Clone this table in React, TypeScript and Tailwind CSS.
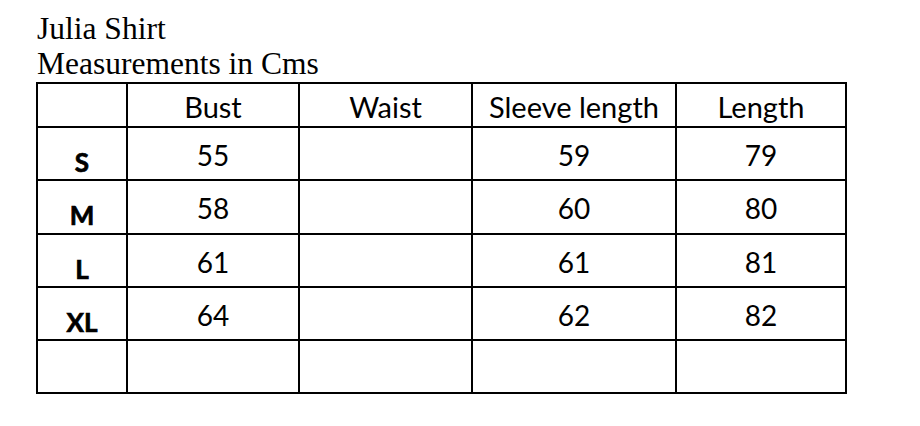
const columns = ["", "Bust", "Waist", "Sleeve length", "Length"]

const widths = ["w-[90px]", "w-[172px]", "w-[173px]", "w-[204px]", "w-[170px]"]

const rows: { size: string; values: string[]; h: string }[] = [
  { size: "S", values: ["55", "", "59", "79"], h: "h-[53px]" },
  { size: "M", values: ["58", "", "60", "80"], h: "h-[54px]" },
  { size: "L", values: ["61", "", "61", "81"], h: "h-[53px]" },
  { size: "XL", values: ["64", "", "62", "82"], h: "h-[53px]" },
  { size: "", values: ["", "", "", ""], h: "h-[53px]" },
]

export default function App() {
  return (
    <div className="w-[920px] h-[426px] bg-white text-black pl-[36px] pt-[11px]">
      <div className="pl-[1px] font-['Liberation_Serif',serif] text-[31.5px] leading-[35px]">
        <div>Julia Shirt</div>
        <div>Measurements in Cms</div>
      </div>

      <div className="mt-[1px] w-[811px] border-l-2 border-t-2 border-black font-['Lato',sans-serif]">
        {/* header row */}
        <div className="flex">
          {columns.map((c, i) => (
            <div
              key={i}
              className={`${widths[i]} h-[44px] border-r-2 border-b-2 border-black text-center text-[29px] leading-[28px] pt-[9px]`}
            >
              {c}
            </div>
          ))}
        </div>

        {rows.map((r, ri) => (
          <div key={ri} className="flex">
            <div
              className={`${widths[0]} ${r.h} border-r-2 border-b-2 border-black text-center font-bold text-[26px] leading-[26px] pt-[21px] [-webkit-text-stroke:0.7px_black]`}
            >
              {r.size}
            </div>
            {r.values.map((v, vi) => (
              <div
                key={vi}
                className={`${widths[vi + 1]} ${r.h} border-r-2 border-b-2 border-black text-center text-[28px] leading-[28px] pt-[13px]`}
              >
                {v}
              </div>
            ))}
          </div>
        ))}
      </div>
    </div>
  )
}
